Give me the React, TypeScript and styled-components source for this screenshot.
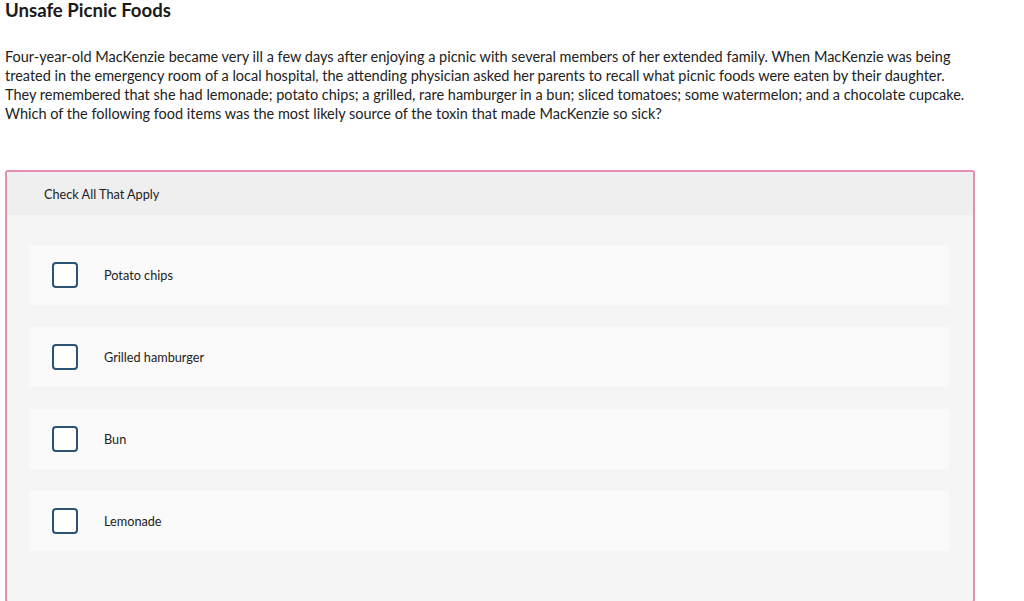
import React from "react";
import styled, { createGlobalStyle } from "styled-components";

const GlobalStyle = createGlobalStyle`
  html, body {
    margin: 0;
    padding: 0;
    background: #ffffff;
  }
  body {
    font-family: Lato, "Open Sans", "Liberation Sans", sans-serif;
    color: #1f1f1f;
  }
`;

const Page = styled.div`
  width: 970px;
  padding: 0 0 0 5px;
`;

const Title = styled.h1`
  margin: 0;
  font-size: 18.6px;
  line-height: 21px;
  font-weight: 700;
  color: #1a1a1a;
`;

const Prompt = styled.p`
  margin: 26px 0 0 0;
  font-size: 14.5px;
  line-height: 19px;
  color: #222222;
`;

const QuestionBox = styled.div`
  margin-top: 47px;
  border: 2px solid #e78fb3;
  border-radius: 3px;
  background: #f5f5f5;
  overflow: hidden;
`;

const Header = styled.div`
  height: 43px;
  display: flex;
  align-items: center;
  padding-left: 37px;
  background: #efefef;
  font-size: 12.7px;
  color: #222222;
`;

const OptionList = styled.div`
  display: flex;
  flex-direction: column;
  gap: 22px;
  padding: 30px 24px 50px 22px;
`;

const Option = styled.label`
  height: 60px;
  display: flex;
  align-items: center;
  background: #fafafa;
  padding-left: 23px;
  font-size: 12.7px;
  color: #222222;
  cursor: pointer;
`;

const Box = styled.span`
  width: 26px;
  height: 26px;
  box-sizing: border-box;
  border: 2px solid #2b5378;
  border-radius: 4px;
  background: #ffffff;
  margin-right: 26px;
  flex-shrink: 0;
`;

const options = ["Potato chips", "Grilled hamburger", "Bun", "Lemonade"];

const App = () => {
  return (
    <>
      <GlobalStyle />
      <Page>
        <Title>Unsafe Picnic Foods</Title>
        <Prompt>
          Four-year-old MacKenzie became very ill a few days after enjoying a
          picnic with several members of her extended family. When MacKenzie
          was being treated in the emergency room of a local hospital, the
          attending physician asked her parents to recall what picnic foods
          were eaten by their daughter. They remembered that she had lemonade;
          potato chips; a grilled, rare hamburger in a bun; sliced tomatoes;
          some watermelon; and a chocolate cupcake. Which of the following food
          items was the most likely source of the toxin that made MacKenzie so
          sick?
        </Prompt>
        <QuestionBox>
          <Header>Check All That Apply</Header>
          <OptionList>
            {options.map((opt) => (
              <Option key={opt}>
                <Box />
                {opt}
              </Option>
            ))}
          </OptionList>
        </QuestionBox>
      </Page>
    </>
  );
};

export default App;
